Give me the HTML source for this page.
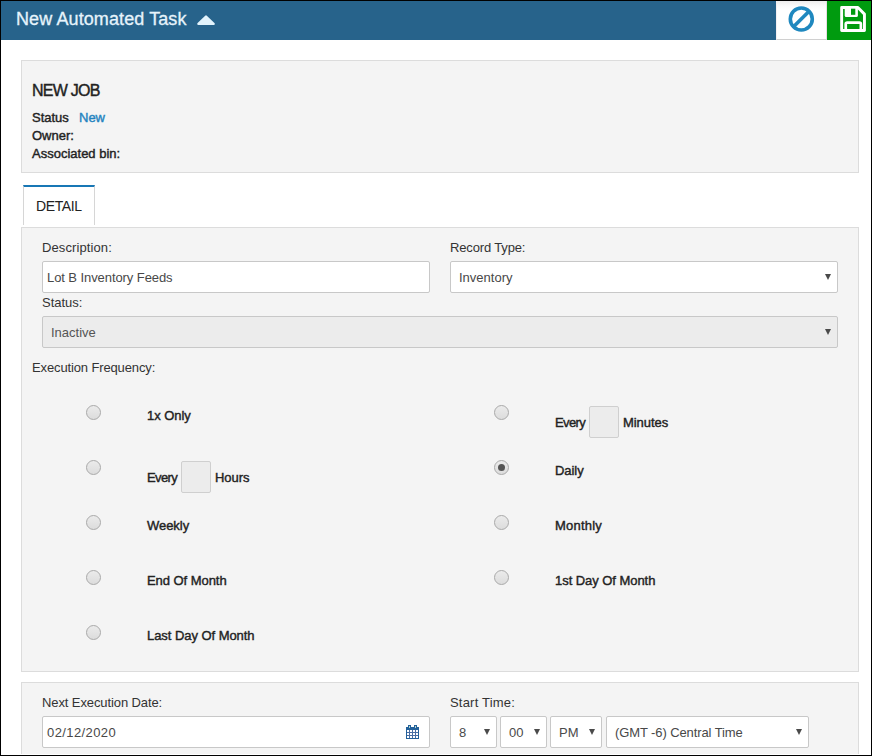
<!DOCTYPE html>
<html><head><meta charset="utf-8">
<style>
html,body{margin:0;padding:0;}
body{width:872px;height:756px;position:relative;overflow:hidden;background:#fff;font-family:"Liberation Sans",sans-serif;color:#333;}
.a{position:absolute;white-space:nowrap;}
#frame{position:absolute;left:0;top:0;width:872px;height:756px;box-sizing:border-box;border:1px solid #000;z-index:50;pointer-events:none;}
#hdr{left:1px;top:1px;width:775px;height:39px;background:#27638b;}
#ttl{left:16px;top:9px;font-size:18px;line-height:20px;color:#e6f3fb;-webkit-text-stroke:0.3px #e6f3fb;letter-spacing:0.1px;}
#caret{left:197px;top:15px;}
#cancel{left:776px;top:1px;width:51px;height:39px;box-sizing:border-box;background:linear-gradient(#ededed 0px,#fafafa 5px,#fff 9px);border-right:1px solid #e8dde3;border-bottom:1px solid #d0d0d0;border-left:1px solid #f4f0f2;}
#save{left:827px;top:1px;width:44px;height:39px;background:#009b0f;}
.panel{position:absolute;background:#f4f4f4;border:1px solid #dcdcdc;box-sizing:border-box;}
.t13{font-size:13px;line-height:15px;}
.t12{font-size:12px;line-height:14px;}
.b{font-weight:bold;}
.m{-webkit-text-stroke:0.4px currentColor;}
.inp{position:absolute;box-sizing:border-box;border:1px solid #c8c8c8;border-radius:2px;background:#fff;}
.dis{background:#ececec;}
.arr{position:absolute;width:0;height:0;border-left:3px solid transparent;border-right:3px solid transparent;border-top:6px solid #4a4a4a;}
.radio{position:absolute;width:15px;height:15px;box-sizing:border-box;border-radius:50%;border:1px solid #a9a9a9;background:linear-gradient(#ebebeb,#dcdcdc);}
.rl{font-size:13px;line-height:15px;color:#222;-webkit-text-stroke:0.4px #222;letter-spacing:-0.05px;}
.box{position:absolute;width:30px;height:32px;box-sizing:border-box;border:1px solid #cfcfcf;border-radius:2px;background:#ececec;}
</style></head><body>
<div id="frame"></div>
<div id="hdr" class="a"></div>
<div id="ttl" class="a">New Automated Task</div>
<svg id="caret" class="a" width="18" height="10" viewBox="0 0 18 10"><path d="M9 1.6 L16.6 8.8 L1.4 8.8 Z" fill="#e2f3fc" stroke="#e2f3fc" stroke-width="2.4" stroke-linejoin="round"/></svg>
<div id="cancel" class="a"></div>
<svg class="a" style="left:788px;top:6px" width="27" height="27" viewBox="0 0 27 27"><circle cx="13.3" cy="13" r="11" fill="none" stroke="#1f88bf" stroke-width="3.6"/><line x1="6" y1="20.3" x2="20.6" y2="5.7" stroke="#1f88bf" stroke-width="3.6"/></svg>
<div id="save" class="a"></div>
<svg class="a" style="left:832px;top:0px" width="40" height="40" viewBox="0 0 40 40"><path d="M9.65 7.55 L25.9 7.55 L32.45 14.1 L32.45 30.55 L9.65 30.55 Z" fill="none" stroke="#fff" stroke-width="2.9" stroke-linejoin="round"/><path d="M12.7 8 L25.9 8 L25.9 15.4 Q25.9 16.9 24.4 16.9 L14.2 16.9 Q12.7 16.9 12.7 15.4 Z" fill="#fff"/><rect x="19" y="8.7" width="4.3" height="6.1" fill="#009b0f"/><path d="M13.75 30 L13.75 24.05 Q13.75 22.55 15.25 22.55 L27.35 22.55 Q28.85 22.55 28.85 24.05 L28.85 30" fill="none" stroke="#fff" stroke-width="2.7"/></svg>

<!-- info panel -->
<div class="panel" style="left:21px;top:60px;width:838px;height:113px;"></div>
<div class="a m" style="left:32px;top:82px;font-size:16px;line-height:18px;color:#222;letter-spacing:-0.75px;">NEW JOB</div>
<div class="a t13 m" style="left:32px;top:110px;color:#222;">Status</div>
<div class="a t13 m" style="left:79px;top:110px;color:#2383c0;">New</div>
<div class="a t13 m" style="left:32px;top:128px;color:#222;">Owner:</div>
<div class="a t13 m" style="left:32px;top:146px;color:#222;">Associated bin:</div>

<!-- tab -->
<div class="a" style="left:23px;top:185px;width:72px;height:40px;box-sizing:border-box;background:#fff;border-top:2px solid #1877b5;border-left:1px solid #d6d6d6;border-right:1px solid #d6d6d6;"></div>
<div class="a" style="left:36px;top:198px;font-size:14px;line-height:16px;letter-spacing:-0.4px;color:#222;">DETAIL</div>

<!-- detail panel -->
<div class="panel" style="left:21px;top:227px;width:838px;height:445px;"></div>
<div class="a t13" style="left:42px;top:240px;letter-spacing:0.1px;">Description:</div>
<div class="inp" style="left:42px;top:261px;width:388px;height:32px;"></div>
<div class="a t13" style="left:47px;top:270px;color:#484848;letter-spacing:-0.08px;">Lot B Inventory Feeds</div>
<div class="a t13" style="left:450px;top:240px;letter-spacing:-0.15px;">Record Type:</div>
<div class="inp" style="left:450px;top:261px;width:388px;height:32px;"></div>
<div class="a t13" style="left:459px;top:270px;color:#484848;">Inventory</div>
<div class="arr" style="left:825px;top:274px;"></div>
<div class="a t13" style="left:42px;top:295px;">Status:</div>
<div class="inp dis" style="left:42px;top:316px;width:796px;height:32px;"></div>
<div class="a t13" style="left:51px;top:325px;color:#555;">Inactive</div>
<div class="arr" style="left:825px;top:329px;"></div>
<div class="a t13" style="left:32px;top:360px;letter-spacing:-0.13px;">Execution Frequency:</div>

<!-- radios left -->
<div class="radio" style="left:86px;top:405px;"></div>
<div class="a rl" style="left:147px;top:408px;">1x Only</div>
<div class="radio" style="left:86px;top:460px;"></div>
<div class="a rl" style="left:147px;top:470px;letter-spacing:-0.6px;">Every</div>
<div class="box" style="left:181px;top:461px;"></div>
<div class="a rl" style="left:215px;top:470px;">Hours</div>
<div class="radio" style="left:86px;top:515px;"></div>
<div class="a rl" style="left:147px;top:518px;">Weekly</div>
<div class="radio" style="left:86px;top:570px;"></div>
<div class="a rl" style="left:147px;top:573px;">End Of Month</div>
<div class="radio" style="left:86px;top:625px;"></div>
<div class="a rl" style="left:147px;top:628px;">Last Day Of Month</div>

<!-- radios right -->
<div class="radio" style="left:494px;top:405px;"></div>
<div class="a rl" style="left:555px;top:415px;letter-spacing:-0.6px;">Every</div>
<div class="box" style="left:589px;top:406px;"></div>
<div class="a rl" style="left:623px;top:415px;">Minutes</div>
<div class="radio" style="left:494px;top:460px;"><div style="position:absolute;left:3px;top:3px;width:7px;height:7px;border-radius:50%;background:#555;"></div></div>
<div class="a rl" style="left:555px;top:463px;">Daily</div>
<div class="radio" style="left:494px;top:515px;"></div>
<div class="a rl" style="left:555px;top:518px;letter-spacing:0.2px;">Monthly</div>
<div class="radio" style="left:494px;top:570px;"></div>
<div class="a rl" style="left:555px;top:573px;">1st Day Of Month</div>

<!-- schedule panel -->
<div class="panel" style="left:21px;top:682px;width:838px;height:72px;border-bottom:none;"></div>
<div class="a t13" style="left:42px;top:695px;letter-spacing:-0.1px;">Next Execution Date:</div>
<div class="inp" style="left:42px;top:716px;width:388px;height:32px;"></div>
<div class="a t13" style="left:47px;top:725px;color:#484848;letter-spacing:0.4px;">02/12/2020</div>
<svg class="a" style="left:406px;top:725px" width="13" height="14" viewBox="0 0 13 14" shape-rendering="crispEdges"><rect x="0" y="2" width="13" height="12" fill="#22609a"/><rect x="2" y="0" width="3" height="3" fill="#22609a"/><rect x="8" y="0" width="3" height="3" fill="#22609a"/><rect x="3" y="1" width="1" height="2" fill="#b9d6c9"/><rect x="9" y="1" width="1" height="2" fill="#b9d6c9"/><rect x="1" y="5" width="2" height="2" fill="#fff"/><rect x="1" y="8" width="2" height="2" fill="#fff"/><rect x="1" y="11" width="2" height="2" fill="#fff"/><rect x="4" y="5" width="2" height="2" fill="#fff"/><rect x="4" y="8" width="2" height="2" fill="#fff"/><rect x="4" y="11" width="2" height="2" fill="#fff"/><rect x="7" y="5" width="2" height="2" fill="#fff"/><rect x="7" y="8" width="2" height="2" fill="#fff"/><rect x="7" y="11" width="2" height="2" fill="#fff"/><rect x="10" y="5" width="2" height="2" fill="#fff"/><rect x="10" y="8" width="2" height="2" fill="#fff"/><rect x="10" y="11" width="2" height="2" fill="#fff"/><rect x="3" y="5" width="1" height="8" fill="#4a6ea3"/><rect x="6" y="5" width="1" height="8" fill="#4a6ea3"/><rect x="9" y="5" width="1" height="8" fill="#4a6ea3"/><rect x="1" y="7" width="11" height="1" fill="#4a6ea3"/><rect x="1" y="10" width="11" height="1" fill="#4a6ea3"/></svg>
<div class="a t13" style="left:450px;top:695px;letter-spacing:0.2px;">Start Time:</div>
<div class="inp" style="left:450px;top:716px;width:47px;height:32px;"></div>
<div class="a t13" style="left:459px;top:725px;color:#4a4a4a;">8</div>
<div class="arr" style="left:484px;top:729px;"></div>
<div class="inp" style="left:500px;top:716px;width:47px;height:32px;"></div>
<div class="a t13" style="left:509px;top:725px;color:#4a4a4a;">00</div>
<div class="arr" style="left:534px;top:729px;"></div>
<div class="inp" style="left:550px;top:716px;width:52px;height:32px;"></div>
<div class="a t13" style="left:559px;top:725px;color:#4a4a4a;">PM</div>
<div class="arr" style="left:589px;top:729px;"></div>
<div class="inp" style="left:606px;top:716px;width:203px;height:32px;"></div>
<div class="a t13" style="left:615px;top:725px;color:#484848;letter-spacing:-0.1px;">(GMT -6) Central Time</div>
<div class="arr" style="left:796px;top:729px;"></div>
</body></html>
